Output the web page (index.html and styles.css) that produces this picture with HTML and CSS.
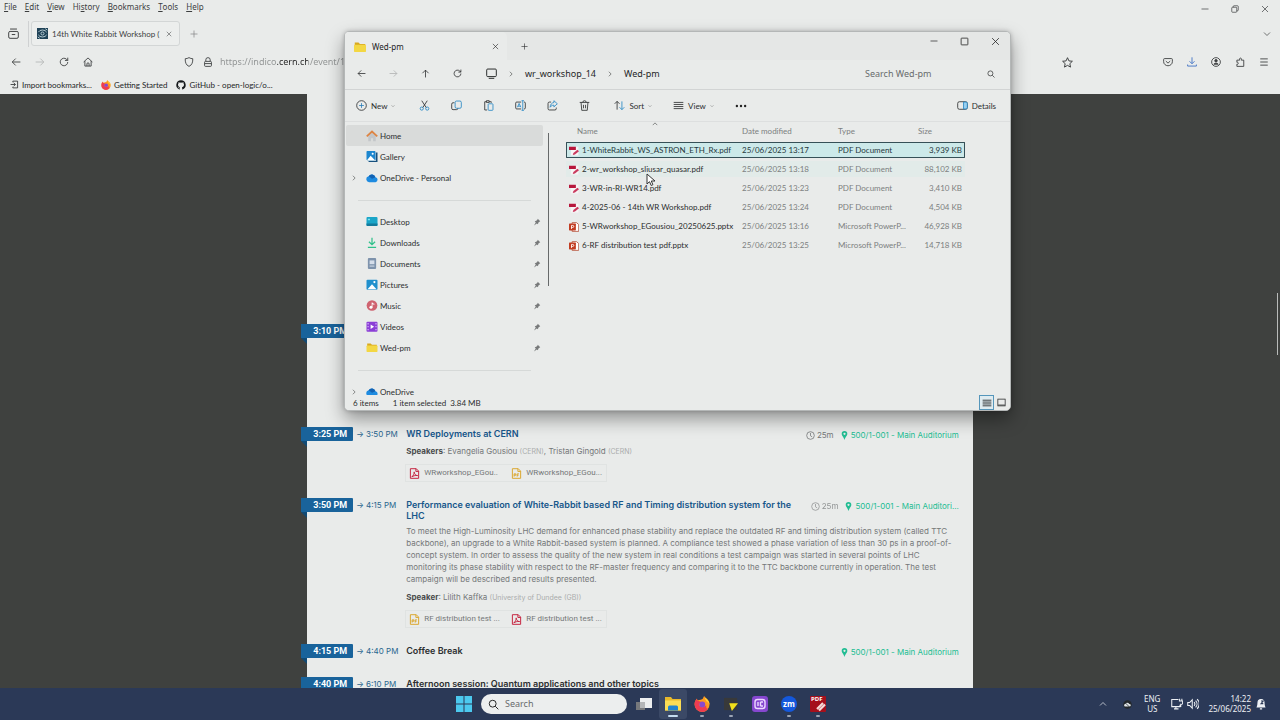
FILE: index.html
```html
<!DOCTYPE html>
<html lang="en">
<head>
<meta charset="utf-8">
<title>14th White Rabbit Workshop</title>
<link rel="stylesheet" href="styles.css">
</head>
<body>
<svg class="sprite" aria-hidden="true">
  <symbol id="back" viewBox="0 0 16 16"><path d="M15 8H2M7.500 2.500 2 8l5.500 5.500"/></symbol>
  <symbol id="fwd" viewBox="0 0 16 16"><path d="M1 8h13M8.500 2.500 14 8l-5.500 5.500"/></symbol>
  <symbol id="up" viewBox="0 0 16 16"><path d="M8 15V2M2.500 7.500 8 2l5.500 5.500"/></symbol>
  <symbol id="reload" viewBox="0 0 16 16"><path d="M14 8a6 6 0 1 1-2-4.500L14 5.500M14 1v4.500H9.500"/></symbol>
  <symbol id="home" viewBox="0 0 16 16"><path d="M1 8 8 1.500 15 8M3 6.500V14.500h10v-8M6.300 14.500V11a1.700 1.700 0 0 1 3.400 0v3.500"/></symbol>
  <symbol id="close" viewBox="0 0 16 16"><path d="M2 2l12 12M14 2 2 14"/></symbol>
  <symbol id="min" viewBox="0 0 16 16"><path d="M1 8h14"/></symbol>
  <symbol id="max" viewBox="0 0 16 16"><rect x="2" y="2" width="12" height="12" rx="1"/></symbol>
  <symbol id="restore" viewBox="0 0 16 16"><rect x="1.500" y="4.500" width="10" height="10" rx="1.500"/><path d="M4.500 4.500V3a1.500 1.500 0 0 1 1.500-1.500h7A1.500 1.500 0 0 1 14.500 3v7a1.500 1.500 0 0 1-1.500 1.500h-1.500"/></symbol>
  <symbol id="plus" viewBox="0 0 16 16"><path d="M8 1v14M1 8h14"/></symbol>
  <symbol id="down" viewBox="0 0 16 16"><path d="M2 5l6 6 6-6"/></symbol>
  <symbol id="right" viewBox="0 0 16 16"><path d="M5 2l6 6-6 6"/></symbol>
  <symbol id="upc" viewBox="0 0 16 16"><path d="M2 11l6-6 6 6"/></symbol>
  <symbol id="tabs" viewBox="0 0 16 16"><rect x="1" y="5" width="14" height="10" rx="2"/><path d="M3 1.500h10M5.500 9.500h5"/></symbol>
  <symbol id="shield" viewBox="0 0 16 16"><path d="M8 1c2 1.300 4 1.700 6 1.700C14.300 8 13 13 8 15 3 13 1.700 8 2 2.700 4 2.700 6 2.300 8 1z"/></symbol>
  <symbol id="lock" viewBox="0 0 16 16"><rect x="2.500" y="7" width="11" height="8" rx="1.500"/><path d="M4.500 7V4.500a3.500 3.500 0 0 1 7 0V7M3 10.500h10"/></symbol>
  <symbol id="star" viewBox="0 0 16 16"><path d="M8 1l2.100 4.700 5 .5-3.700 3.500 1 5L8 12.200l-4.400 2.500 1-5L.9 6.200l5-.5z"/></symbol>
  <symbol id="pocket" viewBox="0 0 16 16"><path d="M2.500 2.500h11A1.500 1.500 0 0 1 15 4v3.500a7 6.500 0 0 1-14 0V4a1.500 1.500 0 0 1 1.500-1.500zM4.500 6.500 8 9.800l3.500-3.300"/></symbol>
  <symbol id="dl" viewBox="0 0 16 16"><path d="M8 .5v10M4 6.800l4 4 4-4M1 12v2.500h14V12"/></symbol>
  <symbol id="user" viewBox="0 0 16 16"><circle cx="8" cy="8" r="7"/><circle cx="8" cy="6" r="2" fill="currentColor"/><path d="M4.500 11.500a4 3 0 0 1 7 0z" fill="currentColor"/></symbol>
  <symbol id="puzzle" viewBox="0 0 16 16"><path d="M3 15V11.500c3 1.300 3-4.300 0-3V5h4.500c-1.500-4.500 4-4.500 2.500 0H14v10z"/></symbol>
  <symbol id="menu" viewBox="0 0 16 16"><path d="M2 3h12M2 8h12M2 13h12"/></symbol>
  <symbol id="import" viewBox="0 0 16 16"><path d="M5 2h8.500v12H5M1 8h8.500M6.500 4.800 9.500 8l-3 3.200M5 2v2M5 12v2"/></symbol>
  <symbol id="fox" viewBox="0 0 16 16"><g stroke="none"><path d="M8 16A7.500 7.500 0 0 1 .6 8C.6 5.500 2 3.500 3 2.500c0 1 .5 1.500 1 1.800C5.500 4 8 4 9 2.500 9.300 1.500 9.500.8 10.300 0c.5 2 5.200 3.500 5.200 8A7.500 7.500 0 0 1 8 16z" fill="#ff9a1f"/><path d="M8 16A7.500 7.500 0 0 1 .6 8c0-2 1-4 2-5 .5 2 3 2 5 3-2.500 1-3 3-1.500 4.500 2 1.500 5 .5 6-1.500.5 2-.5 4 2 3.500A7.500 7.500 0 0 1 8 16z" fill="#ef3b52"/><circle cx="8.300" cy="8.400" r="2.900" fill="#8a48cf"/><path d="M11 1.500c2 1.500 4.500 3.500 4.400 7-.8-2-1.600-2.600-3-3.300C11.500 4 11 3 11 1.500z" fill="#ffd43a"/></g></symbol>
  <symbol id="github" viewBox="0 0 16 16"><path stroke="none" fill="#15181b" d="M8 .5a7.500 7.500 0 0 0-2.400 14.600c.4.100.5-.2.500-.4v-1.400c-2 .4-2.500-.9-2.500-.9-.4-.9-.9-1.100-.9-1.100-.7-.5 0-.5 0-.5.800 0 1.200.8 1.200.8.700 1.200 1.800.9 2.200.7.100-.5.300-.9.500-1.100-1.700-.2-3.400-.9-3.400-3.700 0-.8.300-1.500.8-2-.1-.2-.4-1 .1-2 0 0 .6-.2 2 .8a7 7 0 0 1 3.800 0c1.400-1 2-.8 2-.8.500 1 .2 1.800.1 2 .5.500.8 1.200.8 2 0 2.900-1.700 3.500-3.400 3.700.3.200.5.700.5 1.400v2.100c0 .2.100.5.500.4A7.500 7.500 0 0 0 8 .5z"/></symbol>
  <symbol id="indico" viewBox="0 0 16 16"><rect width="16" height="16" fill="#1f4257" stroke="none"/><g stroke="#b9cfd6"><circle cx="8" cy="8" r="2.200"/><path d="M2 6a6.500 5 0 0 1 12 0M14 10a6.500 5 0 0 1-12 0M1 13l3 2M15 3l-3-2"/></g></symbol>
  <symbol id="folder" viewBox="0 0 16 16"><g stroke="none"><path d="M1 2h5l2 2h7v10H1z" fill="#d9a91f"/><path d="M1 5h14a1 1 0 0 1 1 1v7.500a1 1 0 0 1-1 1H1a1 1 0 0 1-1-1V6a1 1 0 0 1 1-1z" fill="#f3d744"/></g></symbol>
  <symbol id="pc" viewBox="0 0 16 16"><rect x="1" y="1.500" width="14" height="11" rx="1.500"/><path d="M4 15h8"/></symbol>
  <symbol id="search" viewBox="0 0 16 16"><circle cx="6.800" cy="6.800" r="5"/><path d="M10.500 10.500 15 15"/></symbol>
  <symbol id="new" viewBox="0 0 16 16"><circle cx="8" cy="8" r="7"/><path d="M8 4.500v7M4.500 8h7" stroke="#2f7fb8"/></symbol>
  <symbol id="cut" viewBox="0 0 16 16"><path d="M4 1l6.500 10M12 1 5.500 11"/><g stroke="#2385c4"><circle cx="4" cy="12.500" r="2.300"/><circle cx="12" cy="12.500" r="2.300"/></g></symbol>
  <symbol id="copy" viewBox="0 0 16 16"><path d="M5 4H3a2 2 0 0 0-2 2v6a2 2 0 0 0 2 2h5a2 2 0 0 0 2-2"/><rect x="6" y="1.500" width="9" height="10.500" rx="2" stroke="#2385c4"/></symbol>
  <symbol id="paste" viewBox="0 0 16 16"><path d="M6 14.500H2.500v-12H5M9 2.500h3V4M5 1h4v2.500H5z"/><rect x="7.500" y="5.500" width="7" height="9.500" rx="1" stroke="#2385c4"/></symbol>
  <symbol id="rename" viewBox="0 0 16 16"><path d="M9 3H2.500A1.500 1.500 0 0 0 1 4.500v7A1.500 1.500 0 0 0 2.500 13H9M13 3h.5A1.500 1.500 0 0 1 15 4.500v7a1.500 1.500 0 0 1-1.500 1.500H13"/><path d="M9.500 1H13M11.300 1v14M9.500 15H13M3.500 10.500 6 5l2.500 5.500M4.300 9h3.400" stroke="#2385c4"/></symbol>
  <symbol id="share" viewBox="0 0 16 16"><path d="M6 3H3.500A2 2 0 0 0 1.500 5v7.500a2 2 0 0 0 2 2h8a2 2 0 0 0 2-2V11"/><path d="M10 1l5 4.500L10 10V7.500C7.500 7.500 6 8.500 4.500 10.500 4.800 6.500 7 4 10 3.700z" stroke="#2385c4"/></symbol>
  <symbol id="trash" viewBox="0 0 16 16"><path d="M1 3.500h14M5.500 3.500a2.500 2.500 0 0 1 5 0M3 3.500l1 11.500h8l1-11.500M6.500 7v5M9.500 7v5"/></symbol>
  <symbol id="sort" viewBox="0 0 16 16"><path d="M4.500 14V2M1 5.500 4.500 2 8 5.500"/><path d="M11.500 2v12M8 10.500l3.500 3.500 3.500-3.500" stroke="#2385c4"/></symbol>
  <symbol id="view" viewBox="0 0 16 16"><path d="M1 3.500h14M1 6.500h14M1 9.500h14M1 12.500h14"/></symbol>
  <symbol id="more" viewBox="0 0 16 16"><g fill="#222" stroke="none"><circle cx="2.500" cy="8" r="1.600"/><circle cx="8" cy="8" r="1.600"/><circle cx="13.500" cy="8" r="1.600"/></g></symbol>
  <symbol id="details" viewBox="0 0 16 16"><rect x="1" y="2.500" width="14" height="11" rx="2.500"/><path d="M9.500 3H13a2 2 0 0 1 2 2v6a2 2 0 0 1-2 2H9.500z" fill="#9ad0f0" stroke="#2385c4"/></symbol>
  <symbol id="nhome" viewBox="0 0 16 16"><path d="M3 8v7h3.500v-4h3v4H13V8L8 3.500z" fill="#c3c6c9" stroke="none"/><path d="M1 8.500 8 2l7 6.500" stroke="#dd8544" stroke-width="2.400"/></symbol>
  <symbol id="gallery" viewBox="0 0 16 16"><g stroke="none"><path d="M13.500 2H16v14H3v-1.500h10.500z" fill="#17507f"/><rect width="13" height="13.500" rx="1" fill="#1c86cf"/><path d="M1 13l5-6 6 6z" fill="#fff"/><circle cx="9" cy="4" r="1.500" fill="#fff"/></g></symbol>
  <symbol id="cloud" viewBox="0 0 16 16"><g stroke="none"><path d="M4 13.500a4 4 0 0 1-.5-7.900A5 5 0 0 1 12.600 7a3.300 3.300 0 0 1 .2 6.500z" fill="#1e8be0"/><path d="M3.500 5.600A5 5 0 0 1 12.600 7L8 9z" fill="#1262b3"/></g></symbol>
  <symbol id="desktop" viewBox="0 0 16 16"><g stroke="none"><rect y="1.500" width="16" height="13" rx="1.500" fill="#1aa5c8"/><path d="M0 11h16v2a1.500 1.500 0 0 1-1.500 1.500h-13A1.500 1.500 0 0 1 0 13z" fill="#137a9c"/><path d="M2 4h3v2H2z" fill="#7fe3ee"/></g></symbol>
  <symbol id="downloads" viewBox="0 0 16 16"><path d="M8 1v10M3.500 7 8 11.300 12.500 7M2 15h12" stroke="#2fc08a" stroke-width="1.800"/></symbol>
  <symbol id="docs" viewBox="0 0 16 16"><g stroke="none"><rect x="2" y="0" width="12" height="16" rx="1.500" fill="#7e93ac"/><path d="M4.500 3.500h7V9h-7z" fill="#d5deea"/><path d="M4.500 11h7v1.500h-7z" fill="#d5deea"/></g></symbol>
  <symbol id="pictures" viewBox="0 0 16 16"><g stroke="none"><rect y="1" width="16" height="14.500" rx="1.500" fill="#2090cd"/><path d="M1.500 15 8 7.500l6.500 7.500z" fill="#fff"/><circle cx="11.500" cy="4.500" r="1.600" fill="#fff"/></g></symbol>
  <symbol id="music" viewBox="0 0 16 16"><g stroke="none"><circle cx="8" cy="8" r="7.800" fill="#cf6370"/><circle cx="6.500" cy="10.500" r="2.200" fill="#fff"/><path d="M7.500 3.500h1.200C9 5 10 5 11.500 5.300v1.500L8.700 6v4.500H7.500z" fill="#fff"/></g></symbol>
  <symbol id="videos" viewBox="0 0 16 16"><g stroke="none"><rect y="1" width="16" height="14.500" rx="1.500" fill="#8b3fd6"/><path d="M6 5l5 3.200L6 11.500z" fill="#fff"/><path d="M1.500 3h1.600v2H1.500zM1.500 7.200h1.600v2H1.500zM1.500 11.500h1.600v2H1.500zM13 3h1.600v2H13zM13 7.200h1.600v2H13zM13 11.500h1.600v2H13z" fill="#dcb8ff"/></g></symbol>
  <symbol id="pin" viewBox="0 0 16 16"><path stroke="none" fill="#77797a" d="M9.500 1.500 14.500 6.500 12.800 7.300 10.500 9.600 10 12.500 7.500 10.800 2 15 5.500 9 3.500 6.500 6.500 5.700 8.800 3.300z"/></symbol>
  <symbol id="pdf" viewBox="0 0 16 16"><g stroke="none"><path d="M3 1h12v14H3z" fill="#f8f4f5"/><path d="M0 1h11v5.500H0z" fill="#b7173c"/><path d="M6 14.500l1-3.500 6.500-5 2.500 2.500L9.500 13.500z" fill="#c93a5e"/></g></symbol>
  <symbol id="ppt" viewBox="0 0 16 16"><g><path d="M5 1h7l3.500 3v11H5z" fill="#fff" stroke="#b75a45"/><rect y="2.500" width="11" height="11" rx="1" fill="#c23d22" stroke="none"/><path d="M4 11V5.500h2a1.600 1.600 0 0 1 0 3.200H4" stroke="#fff"/></g></symbol>
  <symbol id="clock" viewBox="0 0 16 16"><circle cx="8" cy="8" r="6.800"/><path d="M8 3.500V8.500l3 2"/></symbol>
  <symbol id="place" viewBox="0 0 16 16"><path fill="currentColor" stroke="none" fill-rule="evenodd" d="M8 0a5 5 0 0 1 5 5c0 3.500-3 5-5 11-2-6-5-7.500-5-11a5 5 0 0 1 5-5zM8 3a2 2 0 1 0 0 4 2 2 0 0 0 0-4z"/></symbol>
  <symbol id="apdf" viewBox="0 0 16 16"><path d="M2 1h8.500L14 4.500V15H2zM10 1v4h4M4 13c2-1.500 4-5 3.500-7.500M7.500 6C8 9 10 11 12.500 11 9 10.500 6 11.500 4 13"/></symbol>
  <symbol id="appt" viewBox="0 0 16 16"><path d="M2 1h8.500L14 4.500V15H2zM10 1v4h4M4.500 8.500v4M4.500 8.500H7v2H4.500M9 12.500v-4h2.500M9 10.500h2"/></symbol>
  <symbol id="pane" viewBox="0 0 16 16"><rect x="1.500" y="2" width="13" height="12"/><path d="M2 12.500h12"/></symbol>
  <symbol id="win" viewBox="0 0 16 16"><path d="M0 0h7.500v7.500H0zM8.500 0H16v7.500H8.500zM0 8.500h7.500V16H0zM8.500 8.500H16V16H8.500z" fill="#4cc9ef" stroke="none"/></symbol>
  <symbol id="taskview" viewBox="0 0 16 16"><g stroke="none"><path d="M0 6h9v8H0z" fill="#77797c"/><path d="M4 2h12v10H4z" fill="#eceeef"/><path d="M4 6h5v6H4z" fill="#b4b6b8"/></g></symbol>
  <symbol id="explorer" viewBox="0 0 16 16"><g stroke="none"><path d="M0 1h6l1.500 2H16v11.500H0z" fill="#e9b92b"/><path d="M0 4.500h16v10H0z" fill="#f9dc55"/><path d="M3 14.500V11a1.500 1.500 0 0 1 1.500-1.500h7A1.500 1.500 0 0 1 13 11v3.500z" fill="#1f83cf"/></g></symbol>
  <symbol id="sticky" viewBox="0 0 16 16"><g stroke="none"><path d="M0 1h15v14H0z" fill="#38393a"/><path d="M6 7h10l-7 9z" fill="#f3e11c"/></g></symbol>
  <symbol id="purple" viewBox="0 0 16 16"><rect width="16" height="16" rx="3" fill="#8647cf" stroke="none"/><g stroke="#ecd9ff"><rect x="3" y="3.500" width="10" height="9" rx="2.500"/><path d="M6 6v4M8.500 6v4M8.500 6H11M8.500 10H11"/></g></symbol>
  <symbol id="pdfx" viewBox="0 0 16 16"><rect width="16" height="16" rx="1" fill="#a5101c" stroke="none"/><path d="M7 13l6-6M9 14.500l6-6" stroke="#f5dcd8" stroke-width="2.200"/></symbol>
  <symbol id="tcloud" viewBox="0 0 16 16"><circle cx="8" cy="8" r="7.500" fill="#23282c" stroke="none"/><path d="M3 11.500a2.500 2.500 0 0 1 1-4.500 4 4 0 0 1 7 0 2.400 2.400 0 0 1 1.500 4.500z" fill="#dfe4e6" stroke="none"/><path d="M3 4l10 10" stroke="#23282c"/></symbol>
  <symbol id="net" viewBox="0 0 16 16"><path d="M10 2H1v9.500h11V9M4 14.500h6M6.500 11.500v3M11.500 1v3M14.500 1v3M10.500 4h5v2.500a2 2 0 0 1-2.500 2V12"/></symbol>
  <symbol id="sound" viewBox="0 0 16 16"><path d="M1 6h2.500L7 2.500v11L3.500 10H1zM9.500 5.500a4 4 0 0 1 0 5M11.500 3.500a6.500 6.500 0 0 1 0 9M13.500 1.500a9 9 0 0 1 0 13"/></symbol>
  <symbol id="bell" viewBox="0 0 16 16"><path d="M3 12c1-2 1-3 1-6a4 4 0 0 1 8 0c0 3 0 4 1 6zM6.500 14.500h3" fill="#eef1f5"/><path d="M8 4h3L8 7.500h3" stroke="#2b3957"/></symbol>
</svg>

<header class="browser">
  <div class="menubar">
    <nav class="menus"><button><u>F</u>ile</button><button><u>E</u>dit</button><button><u>V</u>iew</button><button>Hi<u>s</u>tory</button><button><u>B</u>ookmarks</button><button><u>T</u>ools</button><button><u>H</u>elp</button></nav>
    <div class="wincontrols"><button aria-label="Minimize"><svg class="i8"><use href="#min"/></svg></button><button aria-label="Restore"><svg class="i8"><use href="#restore"/></svg></button><button aria-label="Close"><svg class="i8"><use href="#close"/></svg></button></div>
  </div>
  <div class="tabbar">
    <button class="tabs-view" aria-label="Firefox View"><svg class="i11"><use href="#tabs"/></svg></button>
    <div class="tab"><svg class="i11"><use href="#indico"/></svg><span class="tab-title">14th White Rabbit Workshop (</span><button aria-label="Close tab"><svg class="i6"><use href="#close"/></svg></button></div>
    <button aria-label="New tab"><svg class="i8 faint"><use href="#plus"/></svg></button>
    <button class="push" aria-label="List all tabs"><svg class="i8"><use href="#down"/></svg></button>
  </div>
  <div class="navbar">
    <div class="navset"><button aria-label="Back"><svg class="i10"><use href="#back"/></svg></button><button aria-label="Forward" disabled><svg class="i10"><use href="#fwd"/></svg></button><button aria-label="Reload"><svg class="i10"><use href="#reload"/></svg></button><button aria-label="Home page"><svg class="i10"><use href="#home"/></svg></button></div>
    <div class="urlbar"><svg class="i10"><use href="#shield"/></svg><svg class="i10"><use href="#lock"/></svg><input class="url" type="text" aria-label="Address" value="https://indico.cern.ch/event/15"><button aria-label="Bookmark this page"><svg class="i11"><use href="#star"/></svg></button></div>
    <div class="navset"><button aria-label="Pocket"><svg class="i10"><use href="#pocket"/></svg></button><button class="blue" aria-label="Downloads"><svg class="i10"><use href="#dl"/></svg></button><button aria-label="Account"><svg class="i10"><use href="#user"/></svg></button><button aria-label="Extensions"><svg class="i10"><use href="#puzzle"/></svg></button><button aria-label="Menu"><svg class="i10"><use href="#menu"/></svg></button></div>
  </div>
  <div class="bookmarks">
    <a href="#"><svg class="i9"><use href="#import"/></svg>Import bookmarks...</a>
    <a href="#"><svg class="i10"><use href="#fox"/></svg>Getting Started</a>
    <a href="#"><svg class="i10"><use href="#github"/></svg>GitHub - open-logic/o...</a>
  </div>
</header>

<main class="page">
  <div class="page-thumb"></div>
  <div class="sheet">
    <section class="entry early"><time class="start">3:10 PM</time></section>
    <section class="entry deploy">
      <time class="start">3:25 PM</time><span class="end">→ 3:50 PM</span>
      <div class="talk">
        <div class="talk-head"><h2><a href="#">WR Deployments at CERN</a></h2><span class="dur"><svg class="i9"><use href="#clock"/></svg>25m</span><a class="room" href="#"><svg class="i9"><use href="#place"/></svg>500/1-001 - Main Auditorium</a></div>
        <p class="speakers"><b>Speakers</b>: Evangelia Gousiou <small>(CERN)</small>, Tristan Gingold <small>(CERN)</small></p>
        <div class="files"><a href="#"><svg class="i11 red"><use href="#apdf"/></svg>WRworkshop_EGou..</a><a href="#"><svg class="i11 gold"><use href="#appt"/></svg>WRworkshop_EGou...</a></div>
      </div>
    </section>
    <section class="entry perf">
      <time class="start">3:50 PM</time><span class="end">→ 4:15 PM</span>
      <div class="talk">
        <div class="talk-head"><h2><a href="#">Performance evaluation of White-Rabbit based RF and Timing distribution system for the LHC</a></h2><span class="dur light"><svg class="i9"><use href="#clock"/></svg>25m</span><a class="room" href="#"><svg class="i9"><use href="#place"/></svg>500/1-001 - Main Auditori...</a></div>
        <p class="abstract">To meet the High-Luminosity LHC demand for enhanced phase stability and replace the outdated RF and timing distribution system (called TTC<br>backbone), an upgrade to a White Rabbit-based system is planned. A compliance test showed a phase variation of less than 30 ps in a proof-of-<br>concept system. In order to assess the quality of the new system in real conditions a test campaign was started in several points of LHC<br>monitoring its phase stability with respect to the RF-master frequency and comparing it to the TTC backbone currently in operation. The test<br>campaign will be described and results presented.</p>
        <p class="speakers"><b>Speaker</b>: Lilith Kaffka <small>(University of Dundee (GB))</small></p>
        <div class="files"><a href="#"><svg class="i11 gold"><use href="#appt"/></svg>RF distribution test ...</a><a href="#"><svg class="i11 red"><use href="#apdf"/></svg>RF distribution test ...</a></div>
      </div>
    </section>
    <section class="entry break">
      <time class="start">4:15 PM</time><span class="end">→ 4:40 PM</span>
      <div class="talk"><div class="talk-head"><h2>Coffee Break</h2><a class="room" href="#"><svg class="i9"><use href="#place"/></svg>500/1-001 - Main Auditorium</a></div></div>
    </section>
    <section class="entry">
      <time class="start">4:40 PM</time><span class="end">→ 6:10 PM</span>
      <div class="talk"><div class="talk-head"><h2>Afternoon session: Quantum applications and other topics</h2></div></div>
    </section>
  </div>
</main>

<footer class="taskbar">
  <div class="apps">
    <button aria-label="Start"><svg class="i16"><use href="#win"/></svg></button>
    <label class="tsearch"><svg class="i11"><use href="#search"/></svg><input type="search" placeholder="Search" aria-label="Search"></label>
    <div class="pinned">
      <button aria-label="Task view"><svg class="i16"><use href="#taskview"/></svg></button>
      <button class="active" aria-label="File Explorer"><svg class="i16"><use href="#explorer"/></svg></button>
      <button class="open" aria-label="Firefox"><svg class="i16"><use href="#fox"/></svg></button>
      <button class="open" aria-label="Sticky Notes"><svg class="i14"><use href="#sticky"/></svg></button>
      <button aria-label="Recorder"><svg class="i16"><use href="#purple"/></svg></button>
      <button class="open" aria-label="Zoom"><span class="zm">zm</span></button>
      <button class="open" aria-label="PDF editor"><span class="pdfapp"><svg class="i16"><use href="#pdfx"/></svg><span>PDF</span></span></button>
    </div>
  </div>
  <div class="tray">
    <button aria-label="Show hidden icons"><svg class="i8"><use href="#upc"/></svg></button>
    <svg class="i9"><use href="#tcloud"/></svg>
    <span class="lang">ENG<br>US</span>
    <span class="status-icons"><svg class="i12"><use href="#net"/></svg><svg class="i12"><use href="#sound"/></svg></span>
    <span class="clock">14:22<br>25/06/2025</span>
    <svg class="i12"><use href="#bell"/></svg>
  </div>
</footer>

<section class="explorer" aria-label="File Explorer">
  <div class="ex-title">
    <div class="ex-tab"><svg class="i12"><use href="#folder"/></svg><span>Wed-pm</span><button aria-label="Close tab"><svg class="i7"><use href="#close"/></svg></button></div>
    <button class="ex-plus" aria-label="New tab"><svg class="i7"><use href="#plus"/></svg></button>
    <div class="ex-controls"><button aria-label="Minimize"><svg class="i8"><use href="#min"/></svg></button><button aria-label="Maximize"><svg class="i9"><use href="#max"/></svg></button><button aria-label="Close"><svg class="i9"><use href="#close"/></svg></button></div>
  </div>
  <div class="ex-address">
    <div class="ex-nav"><button aria-label="Back"><svg class="i9"><use href="#back"/></svg></button><button aria-label="Forward" disabled><svg class="i9"><use href="#fwd"/></svg></button><button aria-label="Up"><svg class="i9"><use href="#up"/></svg></button><button aria-label="Refresh"><svg class="i9"><use href="#reload"/></svg></button></div>
    <div class="crumbs"><svg class="i11"><use href="#pc"/></svg><svg class="i6"><use href="#right"/></svg><a href="#">wr_workshop_14</a><svg class="i6"><use href="#right"/></svg><a href="#">Wed-pm</a></div>
    <label class="ex-search"><input type="search" placeholder="Search Wed-pm" aria-label="Search Wed-pm"><svg class="i8"><use href="#search"/></svg></label>
  </div>
  <div class="ex-tools">
    <button class="new"><svg class="i11"><use href="#new"/></svg>New<svg class="i4"><use href="#down"/></svg></button>
    <div class="acts"><button aria-label="Cut"><svg class="i11"><use href="#cut"/></svg></button><button aria-label="Copy"><svg class="i11"><use href="#copy"/></svg></button><button aria-label="Paste"><svg class="i11"><use href="#paste"/></svg></button><button aria-label="Rename"><svg class="i11"><use href="#rename"/></svg></button><button aria-label="Share"><svg class="i11"><use href="#share"/></svg></button><button aria-label="Delete"><svg class="i11"><use href="#trash"/></svg></button></div>
    <button class="sort"><svg class="i11"><use href="#sort"/></svg>Sort<svg class="i4"><use href="#down"/></svg></button>
    <button class="sort"><svg class="i11"><use href="#view"/></svg>View<svg class="i4"><use href="#down"/></svg></button>
    <button class="dots" aria-label="More"><svg class="i12"><use href="#more"/></svg></button>
    <button class="push"><svg class="i11"><use href="#details"/></svg>Details</button>
  </div>
  <div class="ex-body">
    <nav class="side">
      <ul>
        <li class="on"><svg class="ic i12"><use href="#nhome"/></svg>Home</li>
        <li><svg class="ic i11"><use href="#gallery"/></svg>Gallery</li>
        <li><svg class="chev i6"><use href="#right"/></svg><svg class="ic i12"><use href="#cloud"/></svg>OneDrive - Personal</li>
      </ul>
      <ul>
        <li><svg class="ic i11"><use href="#desktop"/></svg>Desktop<svg class="pin i8"><use href="#pin"/></svg></li>
        <li><svg class="ic i11"><use href="#downloads"/></svg>Downloads<svg class="pin i8"><use href="#pin"/></svg></li>
        <li><svg class="ic i11"><use href="#docs"/></svg>Documents<svg class="pin i8"><use href="#pin"/></svg></li>
        <li><svg class="ic i11"><use href="#pictures"/></svg>Pictures<svg class="pin i8"><use href="#pin"/></svg></li>
        <li><svg class="ic i11"><use href="#music"/></svg>Music<svg class="pin i8"><use href="#pin"/></svg></li>
        <li><svg class="ic i11"><use href="#videos"/></svg>Videos<svg class="pin i8"><use href="#pin"/></svg></li>
        <li><svg class="ic i11"><use href="#folder"/></svg>Wed-pm<svg class="pin i8"><use href="#pin"/></svg></li>
      </ul>
      <ul>
        <li><svg class="chev i6"><use href="#right"/></svg><svg class="ic i12"><use href="#cloud"/></svg>OneDrive</li>
      </ul>
    </nav>
    <div class="side-thumb"></div>
    <div class="list">
      <svg class="sortmark i6"><use href="#upc"/></svg>
      <table>
        <thead><tr><th class="c-name">Name</th><th class="c-date">Date modified</th><th class="c-type">Type</th><th class="c-size">Size</th></tr></thead>
        <tbody>
          <tr class="sel"><td><svg class="i10"><use href="#pdf"/></svg>1-WhiteRabbit_WS_ASTRON_ETH_Rx.pdf</td><td>25/06/2025 13:17</td><td>PDF Document</td><td>3,939 KB</td></tr>
          <tr class="hov"><td><svg class="i10"><use href="#pdf"/></svg>2-wr_workshop_sliusar_quasar.pdf</td><td>25/06/2025 13:18</td><td>PDF Document</td><td>88,102 KB</td></tr>
          <tr><td><svg class="i10"><use href="#pdf"/></svg>3-WR-in-RI-WR14.pdf</td><td>25/06/2025 13:23</td><td>PDF Document</td><td>3,410 KB</td></tr>
          <tr><td><svg class="i10"><use href="#pdf"/></svg>4-2025-06 - 14th WR Workshop.pdf</td><td>25/06/2025 13:24</td><td>PDF Document</td><td>4,504 KB</td></tr>
          <tr><td><svg class="i10"><use href="#ppt"/></svg>5-WRworkshop_EGousiou_20250625.pptx</td><td>25/06/2025 13:16</td><td>Microsoft PowerP...</td><td>46,928 KB</td></tr>
          <tr><td><svg class="i10"><use href="#ppt"/></svg>6-RF distribution test pdf.pptx</td><td>25/06/2025 13:25</td><td>Microsoft PowerP...</td><td>14,718 KB</td></tr>
        </tbody>
      </table>
    </div>
  </div>
  <div class="ex-status"><span>6 items</span><span>1 item selected</span><span>3.84 MB</span><div class="modes"><button class="cur" aria-label="Details view"><svg class="i10"><use href="#view"/></svg></button><button aria-label="Large icons"><svg class="i9"><use href="#pane"/></svg></button></div></div>
</section>
<svg class="cursor" viewBox="0 0 10 14"><path d="M1 1v10l2.500-2.300L5.200 12.500l1.700-.8L5.300 8H9z" fill="#fff" stroke="#333"/></svg>
</body>
</html>
```
FILE: styles.css
```css
* { box-sizing: border-box; }
body {
  margin: 0;
  height: 100vh;
  display: flex;
  flex-direction: column;
  overflow: hidden;
  font: 8px/12px Lato, "Noto Sans", sans-serif;
  color: #2c2e2f;
  background: #3f413f;
}
button, input { font: inherit; color: inherit; border: 0; padding: 0; margin: 0; background: none; outline: 0; }
button { display: inline-flex; align-items: center; justify-content: center; }
a { color: inherit; text-decoration: none; }
h2, p, ul { margin: 0; padding: 0; font-size: inherit; list-style: none; }
svg { flex: none; fill: none; stroke: currentColor; stroke-width: 1.4; width: 16px; height: 16px; }
.sprite { position: absolute; width: 0; height: 0; }
.i4 { width: 4px; height: 4px; }
.i6 { width: 6px; height: 6px; }
.i7 { width: 7px; height: 7px; }
.i8 { width: 8px; height: 8px; }
.i9 { width: 9px; height: 9px; }
.i10 { width: 10px; height: 10px; }
.i11 { width: 11px; height: 11px; }
.i12 { width: 12px; height: 12px; }
.i14 { width: 14px; height: 14px; }
.faint { opacity: .6; }
.push { margin-left: auto; }
button:disabled { opacity: .3; }

/* Browser chrome */
.browser { flex: none; background: #e9ebea; color: #3c3e3f; }
.menubar { display: flex; justify-content: space-between; height: 18px; padding: 0 10px 0 4px; }
.menus { display: flex; gap: 8px; height: 14px; font-family: "Noto Sans", sans-serif; }
.menus u { text-underline-offset: 1px; }
.wincontrols { display: flex; gap: 22px; padding-right: 1px; }
.tabbar { display: flex; align-items: center; height: 31px; padding: 0 9px 0 8px; }
.tabs-view { padding-right: 9px; border-right: 1px solid #cfd1d2; height: 26px; }
.tab { display: flex; align-items: center; gap: 4px; width: 149px; height: 25px; margin: 0 10px 0 2px; padding: 0 7px 0 5px; border: 1px solid #d3d6d6; border-radius: 3px; background: #eceeed; }
.tab-title { flex: 1; white-space: nowrap; }
.navbar { display: flex; align-items: center; height: 26px; padding: 0 11px; }
.navset { display: flex; gap: 14px; }
.urlbar { flex: 1; display: flex; align-items: center; gap: 9px; margin: 0 90px 0 91px; }
.url {
  flex: 1;
  font: 9px/12px "Noto Sans", sans-serif;
  margin-left: -2px;
  color: transparent;
  background: linear-gradient(90deg, #8f9292 57px, #222 57px 88px, #8f9292 88px);
  -webkit-background-clip: text;
  background-clip: text;
}
.blue { color: #3b6fc4; }
.bookmarks { display: flex; align-items: center; gap: 9px; height: 19px; padding: 0 10px; color: #242627; }
.bookmarks a { display: flex; align-items: center; gap: 3px; }

/* Timetable page */
.page { flex: 1; min-height: 0; overflow: hidden; position: relative; background: #3f413f; font-family: Inter, Roboto, sans-serif; }
.page-thumb { position: absolute; right: 2px; top: 199px; width: 1px; height: 62px; background: #b9bbba; }
.sheet { width: 52%; min-height: 100%; margin: 0 auto; padding: 230px 14px 0 0; background: #e9ebea; }
.entry { display: grid; grid-template-columns: 46px 53px 1fr; align-items: start; }
.start { position: relative; margin-left: -6px; height: 14px; padding-right: 6px; border-radius: 0 1px 1px 0; background: #19639b; color: #fff; font: bold 9px/14px Roboto, sans-serif; text-align: right; }
.start::after { content: ""; position: absolute; left: 0; top: 14px; border: 3px solid; border-color: #124a74 #124a74 transparent transparent; }
.end { padding-left: 3px; line-height: 14px; color: #2a668f; white-space: nowrap; }
.early { height: 103px; }
.deploy { height: 71px; }
.perf { height: 146px; }
.break { height: 33px; }
.talk { padding-top: 1px; color: #757879; }
.talk-head { display: flex; align-items: flex-start; line-height: 14px; }
.talk-head h2 { flex: 1; padding-right: 12px; font-size: 9px; font-weight: 600; line-height: 11px; color: #2d2f30; }
.talk-head h2 a { color: #17578a; }
.dur, .room { display: flex; align-items: center; white-space: nowrap; }
.dur { gap: 2px; margin-right: 6px; }
.light { opacity: .75; }
.room { gap: 2px; color: #22bd93; }
.speakers { padding-top: 2px; line-height: 14px; }
.speakers b { color: #4a4c4d; }
.speakers small { font-size: 7px; color: #a9acac; }
.abstract { padding: 4px 0 3px; white-space: nowrap; }
.files { display: flex; width: max-content; margin: 5px 0 0 -1px; border: 1px solid #e0e3e2; font: 8px/16px Roboto, sans-serif; }
.files a { display: flex; align-items: center; gap: 4px; width: 102px; padding-left: 3px; }
.files a + a { width: 98px; }
.red { color: #c5203c; }
.gold { color: #dba52b; }

/* Taskbar */
.taskbar { flex: none; display: grid; grid-template-columns: 1fr auto 1fr; align-items: center; height: 32px; padding: 0 12px 0 20px; background: #2b3957; color: #eef1f5; }
.apps { grid-column: 2; display: flex; align-items: center; height: 32px; }
.tsearch { display: flex; align-items: center; gap: 6px; width: 146px; height: 20px; margin: 0 3px 0 9px; padding: 0 7px; border-radius: 10px; background: #eceeee; color: #222; }
.tsearch input { flex: 1; min-width: 0; font: 9px/12px "Noto Sans", sans-serif; }
input::placeholder { color: #686b6d; opacity: 1; }
.pinned { display: flex; gap: 1px; }
.pinned button { position: relative; width: 28px; height: 30px; border-radius: 3px; }
.pinned .active { background: #3b4966; }
.open::after, .active::after { content: ""; position: absolute; bottom: 2px; width: 4px; height: 2px; border-radius: 1px; background: #9ba4b4; }
.active::after { width: 10px; background: #c5dcf0; }
.zm { width: 16px; height: 16px; border-radius: 50%; background: #1458dc; color: #fff; font: bold 8px/15px "Open Sans", sans-serif; }
.pdfapp { position: relative; display: flex; }
.pdfapp span { position: absolute; left: 1px; top: 0; color: #fff; font: bold 6px/7px "Open Sans", sans-serif; }
.tray { grid-column: 3; display: flex; align-items: center; justify-content: flex-end; gap: 17px; font: 8px/10px "Noto Sans", sans-serif; }
.tray > .i9 { margin-right: -5px; margin-left: -1px; }
.status-icons { display: flex; gap: 4px; margin-left: -6px; }
.lang { text-align: center; }
.clock { text-align: right; margin: 0 -13px 0 -8px; }
.tray > .i12 { margin-right: 1px; }

/* File Explorer window */
.explorer { position: absolute; left: 344px; top: 31px; width: 667px; height: 380px; display: flex; flex-direction: column; overflow: hidden; border: 1px solid #b4b7b7; border-radius: 5px; background: #e9ebea; box-shadow: 0 8px 18px rgba(0, 0, 0, .38), 0 0 4px rgba(0, 0, 0, .2); }
.ex-title { display: flex; height: 28px; background: #e5e7e6; }
.ex-tab { display: flex; align-items: center; gap: 6px; width: 162px; padding: 1px 8px 0 9px; border-radius: 0 5px 0 0; background: #e9ebea; color: #222; font-family: "Noto Sans", sans-serif; }
.ex-tab button { margin-left: auto; }
.ex-plus { padding: 1px 0 0 14px; }
.ex-controls { display: flex; gap: 22px; margin-left: auto; padding-right: 10px; height: 18px; color: #222; }
.ex-address { display: flex; align-items: center; height: 30px; padding: 0 15px 2px 12px; border-bottom: 1px solid #d2d4d4; font: 9px/12px "Noto Sans", sans-serif; }
.ex-nav { display: flex; gap: 23px; }
.crumbs { display: flex; align-items: center; gap: 11px; margin-left: 24px; color: #242627; }
.ex-search { display: flex; align-items: center; margin-left: auto; }
.ex-search input { width: 122px; }
.ex-tools { display: flex; align-items: center; height: 32px; padding: 0 14px 0 11px; border-bottom: 1px solid #dddfdf; }
.ex-tools button { gap: 4px; }
.ex-tools svg { stroke-width: 1.2; }
.acts { display: flex; gap: 21px; margin: 0 24px; }
.sort { margin-right: 21px; }
.ex-body { flex: 1; min-height: 0; display: flex; overflow: hidden; }
.side { width: 198px; padding: 3px 0 0 1px; }
.side ul { padding-bottom: 23px; background: linear-gradient(#d6d9d8, #d6d9d8) center calc(100% - 10px) / calc(100% - 24px) 1px no-repeat; }
.side li { display: flex; align-items: center; height: 21px; padding-left: 20px; position: relative; }
.side .on { background: #d9dbda; border-radius: 2px; }
.side .ic { width: 12px; margin-right: 2px; }
.side .chev { position: absolute; left: 5px; }
.side .pin { margin: 0 2px 0 auto; }
.side-thumb { width: 1px; height: 153px; margin: 11px 17px 0 5px; background: #66696a; }
.list { position: relative; flex: 1; padding-right: 45px; }
.sortmark { position: absolute; left: 86px; top: -1px; }
table { width: 100%; table-layout: fixed; border-collapse: separate; border-spacing: 0 3px; color: #7c7f80; }
th { height: 14px; padding: 0; font-weight: normal; text-align: left; line-height: 12px; vertical-align: top; }
.c-name { padding-left: 11px; }
.c-date { width: 96px; }
.c-type { width: 80px; }
.c-size { width: 47px; }
td { height: 16px; padding: 0; white-space: nowrap; border: 1px solid transparent; border-width: 1px 0; }
td:first-child { padding-left: 3px; color: #2b2d2e; }
td svg { margin-right: 3px; vertical-align: middle; }
td:last-child { text-align: right; padding-right: 3px; }
.sel td { background: #cce9e9; border-color: #365057; color: #26383c; }
.sel td:first-child { border-left-width: 1px; padding-left: 2px; border-radius: 1px 0 0 1px; }
.sel td:last-child { border-right-width: 1px; padding-right: 2px; border-radius: 0 1px 1px 0; }
.hov td { background: #e2ebe9; }
.ex-status { display: flex; align-items: center; height: 15px; padding: 0 4px 0 8px; background: #e9ebea; }
.ex-status span { margin-right: 14px; }
.ex-status span + span { margin-right: 4px; }
.modes { display: flex; align-items: center; gap: 3px; margin-left: auto; }
.modes .cur { width: 15px; height: 15px; border: 1px solid #5596bb; background: #dfebf0; }
.cursor { position: absolute; left: 646px; top: 173px; width: 10px; height: 14px; stroke-width: 1; }
```
